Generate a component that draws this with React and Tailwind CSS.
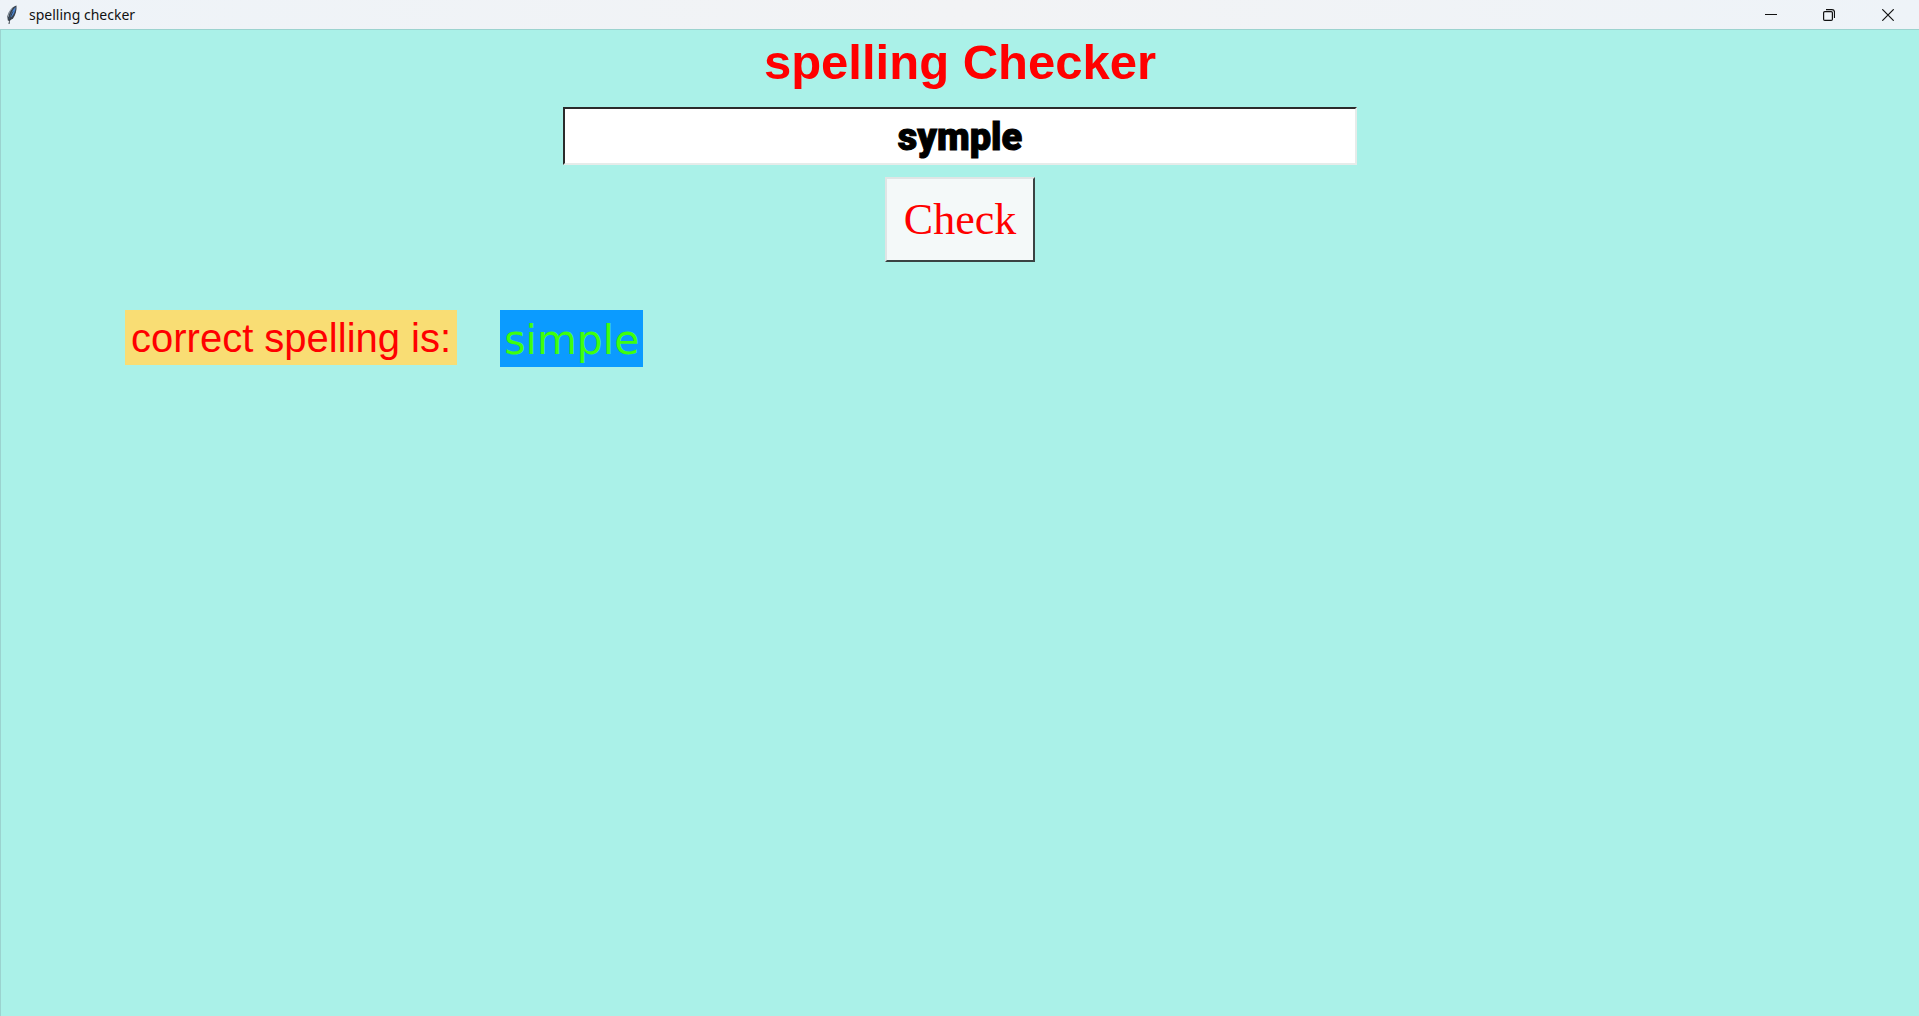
import React, { useState } from "react";

function FeatherIcon() {
  return (
    <svg className="h-5 w-3" viewBox="0 0 12 20" fill="none" aria-hidden="true">
      <path d="M10.5 0.5C7 1.2 2.5 6 1.3 11.5L1.8 15.5L3.2 16L7 13.5C9.5 10 11 5 10.5 0.5Z" fill="#39434e" />
      <path d="M9.6 2C7.2 4.2 4.4 8.5 3.4 13.9C7 11 9.6 6.5 9.6 2Z" fill="#4a86d4" />
      <path d="M6 3.4C4 5.6 2.6 8.4 2.1 12" stroke="#9aa5b1" />
      <path d="M7 6.5C5.2 9.5 4 12.5 3 19" stroke="#343b43" />
    </svg>
  );
}

function TitleBar() {
  return (
    <header className="flex h-[29px] items-center justify-between bg-linear-to-r from-[#eef3f8] via-[#f2f3f5] to-[#eef3f8]">
      <div className="flex items-center gap-[11px] pl-1.5">
        <FeatherIcon />
        <span className="font-['Noto_Sans',sans-serif] text-[14px] leading-5 text-[#111]">spelling checker</span>
      </div>
      <div className="flex h-full pr-px text-[#111]">
        <button type="button" aria-label="Minimize" className="flex w-[58px] items-center justify-center">
          <svg className="size-3" viewBox="0 0 12 12" aria-hidden="true">
            <path d="M0 5.5H12" stroke="currentColor" />
          </svg>
        </button>
        <button type="button" aria-label="Restore" className="flex w-[58px] items-center justify-center">
          <svg className="size-3" viewBox="0 0 12 12" fill="none" stroke="currentColor" aria-hidden="true">
            <path d="M3 0.7H9C10.7 0.7 11.5 1.8 11.5 3.2V9" strokeWidth="1.2" />
            <rect x="0.6" y="2.6" width="8.8" height="8.8" rx="1.2" strokeWidth="1.2" />
          </svg>
        </button>
        <button type="button" aria-label="Close" className="flex w-[60px] items-center justify-center">
          <svg className="size-3" viewBox="0 0 12 12" aria-hidden="true">
            <path d="M0.3 0.3L11.7 11.7M11.7 0.3L0.3 11.7" stroke="currentColor" strokeWidth="1.2" />
          </svg>
        </button>
      </div>
    </header>
  );
}

export default function App() {
  const [word, setWord] = useState("symple");
  return (
    <div className="flex min-h-screen flex-col bg-[#aaf1e8]">
      <TitleBar />
      <main className="flex flex-1 flex-col border-t border-l border-[#9bd3cf]">
        <div className="flex flex-col items-center">
          <h1 className="font-['Liberation_Sans',sans-serif] text-[49px] leading-[64px] font-bold text-[#ff0000]">
            spelling Checker
          </h1>
          <input
            type="text"
            aria-label="Word to check"
            value={word}
            onChange={(e) => setWord(e.target.value)}
            className="mt-[13px] h-[58px] w-[794px] max-w-full border-2 border-t-[#2b2b2b] border-r-[#e6ecea] border-b-[#e6ecea] border-l-[#2b2b2b] bg-white pt-0.5 text-center font-['Impact','Roboto',sans-serif] text-[38px] font-black text-black outline-none [-webkit-text-stroke:1px_black]"
          />
          <button
            type="button"
            className="mt-3 border-2 border-t-[#e0e5e5] border-r-[#3a4343] border-b-[#3a4343] border-l-[#e0e5e5] bg-[#f4f9f9] px-[17px] pt-[13px] pb-3 font-['Georgia','Liberation_Serif',serif] text-[44px] leading-[56px] text-[#ff0000]"
          >
            Check
          </button>
        </div>
        <div className="mt-12 ml-[124px] flex items-start gap-[43px]">
          <p className="bg-[#f9dd74] px-1.5 pt-px font-['Liberation_Sans',sans-serif] text-[40px] leading-[54px] text-[#ff0000]">
            correct spelling is:
          </p>
          <output className="bg-[#0b9bff] px-1 pt-1 font-['DejaVu_Sans',sans-serif] text-[41px] leading-[53px] text-[#3fff0c]">
            simple
          </output>
        </div>
      </main>
    </div>
  );
}
